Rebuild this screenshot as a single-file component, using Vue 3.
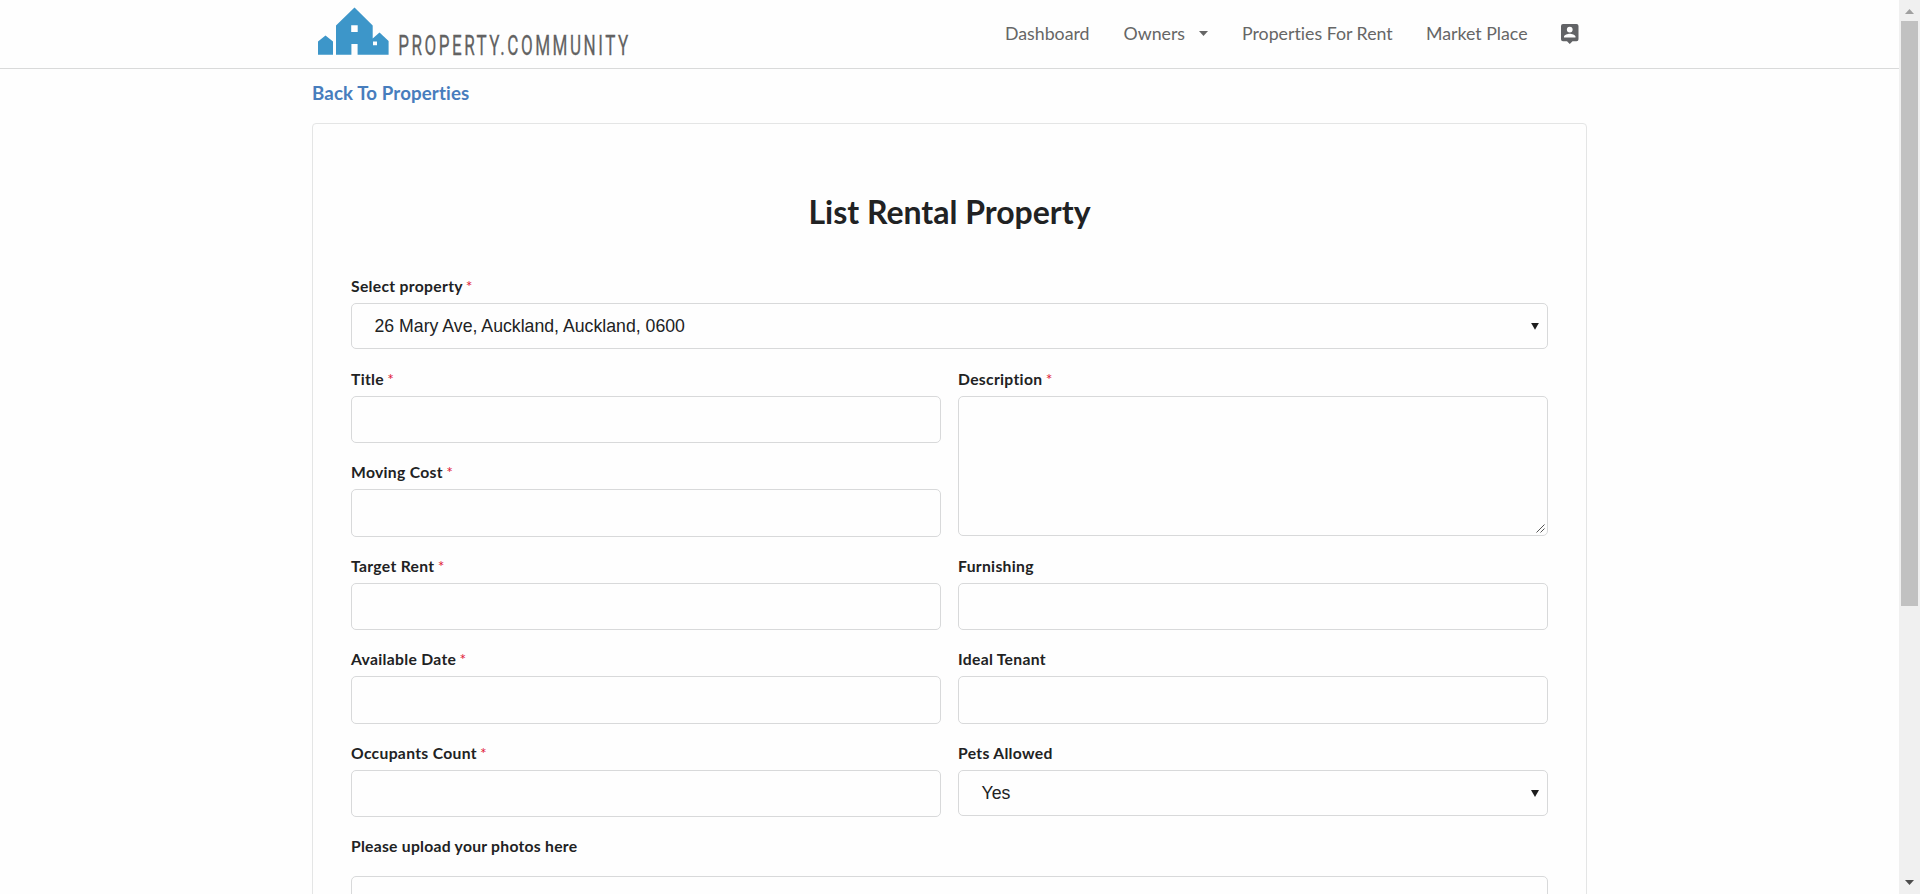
<script setup>
import { ref } from 'vue'

const navLinks = [
  { text: 'Dashboard', cls: 'dashboard' },
  { text: 'Owners', cls: 'owners', caret: true },
  { text: 'Properties For Rent', cls: 'rent' },
  { text: 'Market Place', cls: 'market' },
]
const property = ref('26 Mary Ave, Auckland, Auckland, 0600')
const pets = ref('Yes')
</script>

<template>
  <div class="window">
    <div class="page">
      <header class="topbar">
        <div class="container bar">
          <svg class="logo" width="330" height="68" viewBox="312 0 330 68">
            <path
              fill="#3d96c9"
              fill-rule="evenodd"
              d="M318 54.8V41.6L325.5 35.5L333 41.6V54.8ZM336 54.8V25.4L354.5 7.5L372.7 25.4V38.4L379.5 32.5L388.6 41V54.8H357.6V44H351.4V54.8ZM351.2 25.2V32H357.7V25.2ZM373 41.5V45.3H377V41.5Z"
            />
            <text class="wordmark" transform="translate(398.2 54.8) scale(0.62 1)" textLength="371" lengthAdjust="spacing">PROPERTY.COMMUNITY</text>
          </svg>
          <nav class="nav">
            <a v-for="l in navLinks" :key="l.text" :class="l.cls">
              <span>{{ l.text }}</span>
              <svg v-if="l.caret" class="caret" width="9" height="5" viewBox="0 0 9 5"><path d="M0 0H9L4.5 5Z" fill="#666" /></svg>
            </a>
            <svg class="account" width="18" height="20" viewBox="0 0 18 20">
              <path
                fill="#626366"
                fill-rule="evenodd"
                d="M2 0H15.5Q17.5 0 17.5 2V15.3Q17.5 17.3 15.5 17.3H11.5L8.75 20L6 17.3H2Q0 17.3 0 15.3V2Q0 0 2 0ZM8.75 2.7A2.9 2.9 0 1 0 8.75 8.5A2.9 2.9 0 1 0 8.75 2.7ZM3 13.6H14.5V12.6C14.5 10.7 10.7 9.7 8.75 9.7C6.8 9.7 3 10.7 3 12.6Z"
              />
            </svg>
          </nav>
        </div>
      </header>

      <main class="container">
        <a class="back"><span>Back To Properties</span></a>
        <section class="card">
          <h1><span>List Rental Property</span></h1>
          <form class="form">
            <div class="field full">
              <label>Select property <i>*</i></label>
              <div class="control select">{{ property }}<b class="arrow"></b></div>
            </div>
            <div class="field"><label>Title <i>*</i></label><div class="control"></div></div>
            <div class="field tall">
              <label>Description <i>*</i></label>
              <div class="control area">
                <svg class="grip" width="9" height="9" viewBox="0 0 9 9"><path d="M0.5 8.5L8.5 0.5M4.5 8.5L8.5 4.5" stroke="#555" fill="none" /></svg>
              </div>
            </div>
            <div class="field"><label>Moving Cost <i>*</i></label><div class="control"></div></div>
            <div class="field"><label>Target Rent <i>*</i></label><div class="control"></div></div>
            <div class="field"><label>Furnishing</label><div class="control"></div></div>
            <div class="field"><label>Available Date <i>*</i></label><div class="control"></div></div>
            <div class="field"><label>Ideal Tenant</label><div class="control"></div></div>
            <div class="field"><label>Occupants Count <i>*</i></label><div class="control"></div></div>
            <div class="field">
              <label>Pets Allowed</label>
              <div class="control select">{{ pets }}<b class="arrow"></b></div>
            </div>
            <div class="field full upload"><label>Please upload your photos here</label><div class="control drop"></div></div>
          </form>
        </section>
      </main>
    </div>

    <div class="scrollbar">
      <svg width="9" height="5" viewBox="0 0 9 5"><path d="M0 5L4.5 0L9 5Z" fill="#a0a0a0" /></svg>
      <div class="thumb"></div>
      <svg class="down" width="9" height="5" viewBox="0 0 9 5"><path d="M0 0H9L4.5 5Z" fill="#4d4d4d" /></svg>
    </div>
  </div>
</template>

<style>
body {
  margin: 0;
  overflow: hidden;
}
</style>

<style scoped>
.window {
  display: flex;
  width: 1920px;
  height: 894px;
  overflow: hidden;
  background: #fefefe;
  font-family: Lato, "Liberation Sans", sans-serif;
  font-variant-ligatures: none;
  color: #212223;
}
.window * {
  box-sizing: border-box;
}
.page {
  flex: 1;
  height: 894px;
  overflow: hidden;
}
.container {
  width: 1275px;
  margin: 0 auto;
}
.topbar {
  height: 69px;
  border-bottom: 1px solid #d9dada;
  background: #fefefe;
}
.bar {
  display: flex;
  justify-content: space-between;
}
.logo {
  flex: none;
}
.wordmark {
  font: 400 27.5px Roboto, sans-serif;
  fill: #626262;
  stroke: #626262;
  stroke-width: 0.3px;
}
.nav {
  display: flex;
  align-items: center;
  height: 67px;
  margin-right: 8px;
  font-size: 17.75px;
  color: #666;
  white-space: nowrap;
}
.nav a {
  display: flex;
  align-items: center;
  height: 24px;
  margin-top: -2px;
}
.dashboard {
  width: 118.5px;
}
.owners {
  width: 118.5px;
}
.caret {
  margin: 2px 0 0 13.5px;
}
.rent {
  width: 184px;
}
.market {
  width: 135px;
}
.back {
  display: flex;
  align-items: center;
  height: 48px;
  margin-bottom: 6px;
  font-size: 18.7px;
  font-weight: 700;
  letter-spacing: 0.12px;
  color: #477dbd;
}
.card {
  height: 900px;
  padding: 65px 38px 0;
  border: 1px solid #e4e5e5;
  border-radius: 4px;
  background: #fefefe;
}
h1 {
  margin: 0;
  height: 46px;
  line-height: 46px;
  font-size: 32px;
  font-weight: 700;
  text-align: center;
}
.form {
  display: grid;
  grid-template-columns: 590px 590px;
  column-gap: 17px;
  grid-template-rows: 93px repeat(5, 93.5px);
  padding-top: 38.7px;
}
.field {
  display: flex;
  flex-direction: column;
}
.full {
  grid-column: 1 / 3;
}
.tall {
  grid-row: 2 / 4;
  grid-column: 2;
}
label {
  display: block;
  flex: none;
  height: 29px;
  line-height: 24px;
  font-size: 15.7px;
  font-weight: 700;
  letter-spacing: 0.31px;
  white-space: nowrap;
}
label i {
  margin-left: -0.9px;
  font-style: normal;
  font-weight: 400;
  color: #e0203a;
}
.field:not(.full) label {
  height: 29.2px;
}
.control {
  position: relative;
  flex: none;
  height: 47.2px;
  border: 1px solid #d8d9da;
  border-radius: 5px;
  background: #fefefe;
}
.select {
  height: 46px;
  padding-left: 22.5px;
  font: 17.69px/44px "Liberation Sans", Arial, sans-serif;
}
.area {
  height: 139.9px;
}
.arrow {
  position: absolute;
  right: 8px;
  top: 19px;
  width: 8px;
  height: 7px;
  background: #1d1d1d;
  clip-path: polygon(0 0, 100% 0, 50% 100%);
}
.grip {
  position: absolute;
  right: 2px;
  bottom: 2px;
}
.upload label {
  height: 42px;
  letter-spacing: 0.26px;
}
.drop {
  height: 120px;
}
.scrollbar {
  display: flex;
  flex-direction: column;
  align-items: center;
  width: 21px;
  height: 894px;
  padding: 9px 0;
  background: #f0f0f0;
}
.thumb {
  flex: none;
  width: 17px;
  height: 585px;
  margin-top: 7px;
  background: #c1c1c1;
}
.down {
  margin-top: auto;
}
</style>
